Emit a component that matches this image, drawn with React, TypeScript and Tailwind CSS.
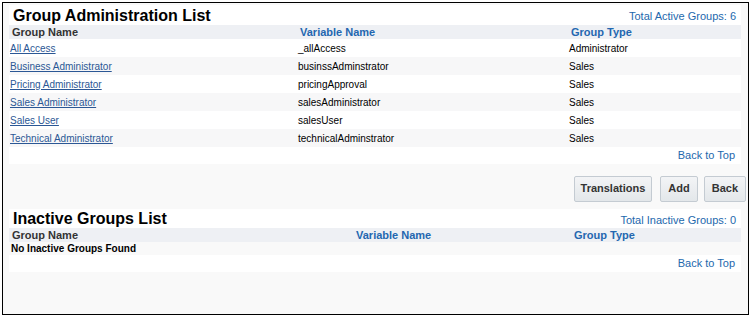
const groups = [
  { name: "All Access", variable: "_allAccess", type: "Administrator" },
  { name: "Business Administrator", variable: "businssAdminstrator", type: "Sales" },
  { name: "Pricing Administrator", variable: "pricingApproval", type: "Sales" },
  { name: "Sales Administrator", variable: "salesAdministrator", type: "Sales" },
  { name: "Sales User", variable: "salesUser", type: "Sales" },
  { name: "Technical Administrator", variable: "technicalAdminstrator", type: "Sales" },
];

function Btn({ label, wide }: { label: string; wide?: boolean }) {
  return (
    <button
      className={`h-[26px] rounded-[2px] border border-[#c4cbd2] bg-gradient-to-b from-[#f3f4f6] to-[#e3e7ea] text-[11px] font-bold text-[#333] ${
        wide ? "px-[6px]" : "px-[7px]"
      }`}
    >
      {label}
    </button>
  );
}

export default function App() {
  return (
    <div
      className="w-[751px] h-[317px] bg-white p-[2px]"
      style={{ fontFamily: '"Liberation Sans", Arial, sans-serif' }}
    >
      <div className="h-[313px] border border-black bg-[#f9f9f9] pt-[2px] pl-[6px] pr-[7px]">
        {/* active groups */}
        <div className="bg-white">
          <div className="h-[20px] flex items-end justify-between">
            <h1 className="pl-[4px] text-[16px] leading-[19px] font-bold text-black">
              Group Administration List
            </h1>
            <span className="pr-[5px] pb-[2px] text-[11px] leading-[14px] text-[#2368ad]">
              Total Active Groups: 6
            </span>
          </div>
          <div className="h-[14px] bg-[#eef0f4] grid grid-cols-[288px_271px_1fr] text-[11px] leading-[14px] font-bold">
            <span className="pl-[3px] text-[#333]">Group Name</span>
            <span className="pl-[3px] text-[#2467b0]">Variable Name</span>
            <span className="pl-[3px] text-[#2467b0]">Group Type</span>
          </div>
          {groups.map((g, i) => (
            <div
              key={g.name}
              className={`h-[18px] grid grid-cols-[288px_271px_1fr] items-center text-[10px] text-black ${
                i % 2 === 1 ? "bg-[#f7f7f8]" : "bg-white"
              }`}
            >
              <a href="#" className="pl-[1px] text-[#2b5795] underline">
                {g.name}
              </a>
              <span className="pl-[1px]">{g.variable}</span>
              <span className="pl-[1px]">{g.type}</span>
            </div>
          ))}
          <div className="h-[17px] flex items-center justify-end pr-[6px]">
            <a href="#" className="text-[11px] text-[#2368ad]">
              Back to Top
            </a>
          </div>
        </div>

        {/* buttons */}
        <div className="h-[45px] flex items-center justify-end gap-[8px] -mr-[5px] pt-[4px]">
          <Btn label="Translations" wide />
          <div className="flex gap-[6px]">
            <Btn label="Add" />
            <Btn label="Back" />
          </div>
        </div>

        {/* inactive groups */}
        <div>
          <div className="h-[19px] bg-white flex items-end justify-between">
            <h1 className="pl-[4px] text-[16px] leading-[19px] font-bold text-black">
              Inactive Groups List
            </h1>
            <span className="pr-[5px] pb-[1px] text-[11px] leading-[14px] text-[#2368ad]">
              Total Inactive Groups: 0
            </span>
          </div>
          <div className="h-[14px] bg-[#eef0f4] grid grid-cols-[344px_218px_1fr] text-[11px] leading-[14px] font-bold">
            <span className="pl-[3px] text-[#333]">Group Name</span>
            <span className="pl-[3px] text-[#2467b0]">Variable Name</span>
            <span className="pl-[3px] text-[#2467b0]">Group Type</span>
          </div>
          <div className="h-[13px] pl-[2px] flex items-center text-[10px] font-bold text-black">
            No Inactive Groups Found
          </div>
          <div className="h-[17px] bg-white flex items-center justify-end pr-[6px]">
            <a href="#" className="text-[11px] text-[#2368ad]">
              Back to Top
            </a>
          </div>
        </div>
      </div>
    </div>
  );
}
